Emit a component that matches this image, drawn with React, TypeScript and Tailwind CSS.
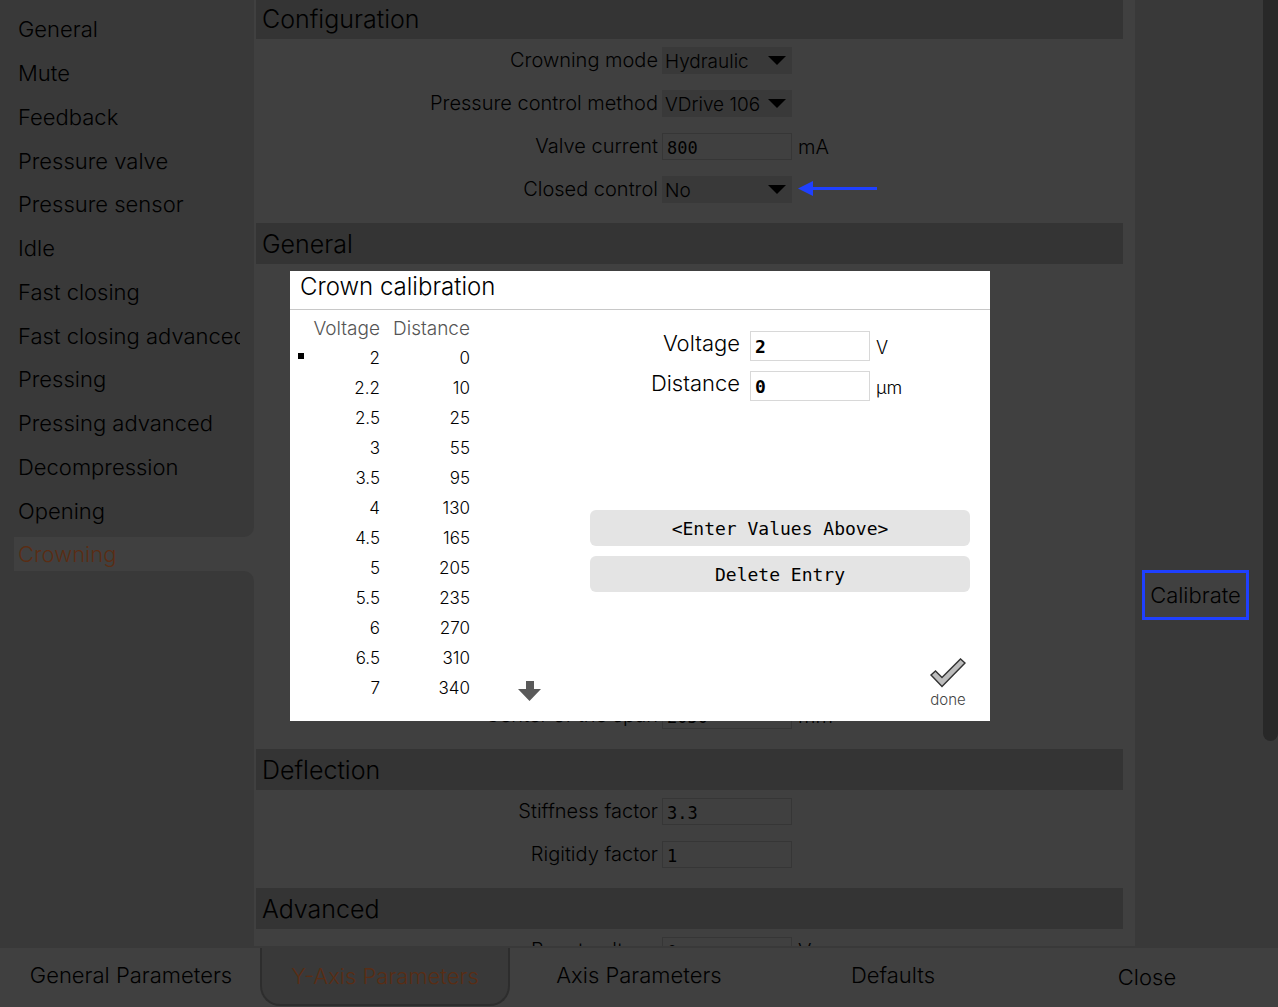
import { ReactNode, useState } from "react";

const NAV = [
  "General",
  "Mute",
  "Feedback",
  "Pressure valve",
  "Pressure sensor",
  "Idle",
  "Fast closing",
  "Fast closing advanced",
  "Pressing",
  "Pressing advanced",
  "Decompression",
  "Opening",
];

const POINTS: [string, string][] = [
  ["2", "0"],
  ["2.2", "10"],
  ["2.5", "25"],
  ["3", "55"],
  ["3.5", "95"],
  ["4", "130"],
  ["4.5", "165"],
  ["5", "205"],
  ["5.5", "235"],
  ["6", "270"],
  ["6.5", "310"],
  ["7", "340"],
];

function Section({ title, children }: { title: string; children: ReactNode }) {
  return (
    <section className="pb-3">
      <h2 className="h-[41px] bg-[#343434] pl-1.5 text-[25px] leading-[42px]">{title}</h2>
      {children}
    </section>
  );
}

function Row({ id, label, unit, children }: { id: string; label: string; unit?: ReactNode; children: ReactNode }) {
  return (
    <div className="flex h-[43px] items-start pt-2">
      <label htmlFor={id} className="w-[406px] shrink-0 pr-1 text-right text-[20px] leading-[27px]">
        {label}
      </label>
      {children}
      {unit}
    </div>
  );
}

function Unit({ children }: { children: ReactNode }) {
  return <span className="pl-1.5 text-[20px] leading-[29px]">{children}</span>;
}

function Choice({ id, value }: { id: string; value: string }) {
  return (
    <div className="relative w-[130px]">
      <select id={id} className="block h-[27px] w-full appearance-none bg-[#393939] pl-[3px] pt-[3px] text-[19px] leading-[24px] outline-none">
        <option>{value}</option>
      </select>
      <svg className="pointer-events-none absolute right-1.5 top-2" width="18" height="10" viewBox="0 0 18 10">
        <path d="M0 1H18L9 10Z" fill="#000" />
      </svg>
    </div>
  );
}

function Field({ id, value }: { id: string; value: string }) {
  return (
    <input
      id={id}
      defaultValue={value}
      className="block h-[27px] w-[130px] border border-[#363636] bg-transparent pl-1 pt-0.5 font-['DejaVu_Sans_Mono',monospace] text-[17px] leading-[24px] outline-none"
    />
  );
}

function CalibrationField({ id, label, value, unit }: { id: string; label: string; value: string; unit: string }) {
  return (
    <div className="flex h-[30px] items-start">
      <label htmlFor={id} className="w-[150px] text-right text-[22px] leading-[25px]">
        {label}
      </label>
      <input
        id={id}
        defaultValue={value}
        className="ml-2.5 h-[30px] w-[120px] border border-[#d8d8d8] bg-white pl-1 font-['DejaVu_Sans_Mono',monospace] text-[18px] font-bold outline-none"
      />
      <span className="ml-1.5 pt-1 text-[18px] leading-[25px]">{unit}</span>
    </div>
  );
}

function CalibrationDialog() {
  const [selected, setSelected] = useState(0);
  const button =
    "h-9 w-full rounded-md bg-[#e4e4e4] font-['DejaVu_Sans_Mono',monospace] text-[18px] leading-[38px]";
  return (
    <div className="fixed inset-0 flex items-center justify-center pb-[15px] pl-0.5">
      <div role="dialog" aria-label="Crown calibration" className="flex h-[450px] w-[700px] flex-col bg-white font-light text-black">
        <h1 className="h-[39px] border-b border-[#c8c8c8] pl-2.5 text-[24px] leading-[32px]">Crown calibration</h1>
        <div className="flex flex-1 pr-5">
          <table className="mt-1 w-[180px] table-fixed self-start text-right text-[17px]">
            <thead>
              <tr className="h-[30px] text-[19px] text-[#555]">
                <th className="w-[18px] p-0" aria-label="Selected" />
                <th className="w-[72px] p-0 text-right font-light">Voltage</th>
                <th className="w-[90px] p-0 text-right font-light">Distance</th>
              </tr>
            </thead>
            <tbody>
              {POINTS.map(([v, d], i) => (
                <tr key={v} className="h-[30px]" onClick={() => setSelected(i)}>
                  <td className="p-0 pl-2">{i === selected && <div className="mb-1.5 size-1.5 bg-black" />}</td>
                  <td className="p-0">{v}</td>
                  <td className="p-0">{d}</td>
                </tr>
              ))}
            </tbody>
          </table>
          <button aria-label="Scroll down" className="mb-5 ml-12 self-end">
            <svg width="23" height="20" viewBox="0 0 23 20">
              <path d="M8 0H16V8H23L11.5 20L0 8H8Z" fill="#5a5a5a" />
            </svg>
          </button>
          <div className="ml-auto flex w-[380px] flex-col pt-[21px]">
            <div className="flex flex-col gap-2.5">
              <CalibrationField id="cal-voltage" label="Voltage" value="2" unit="V" />
              <CalibrationField id="cal-distance" label="Distance" value="0" unit="µm" />
            </div>
            <div className="mt-[109px] flex flex-col gap-2.5">
              <button className={button}>&lt;Enter Values Above&gt;</button>
              <button className={button}>Delete Entry</button>
            </div>
            <button className="mb-3 mr-1 mt-auto flex flex-col items-center self-end text-[15px] leading-[18px] text-[#444]">
              <svg className="mb-[3px]" width="36" height="30" viewBox="0 0 36 30">
                <path d="M1 17L5.500 13L12 19.500L30.500 1L35 5L12 28.500Z" fill="#bdbdbd" stroke="#333" strokeWidth="1.500" />
              </svg>
              done
            </button>
          </div>
        </div>
      </div>
    </div>
  );
}

export default function App() {
  const tab = "h-[58px] whitespace-nowrap pb-1 text-center text-[22px] leading-[54px]";
  return (
    <div className="flex h-screen flex-col overflow-hidden bg-[#404040] font-['Inter','Liberation_Sans',sans-serif] font-light text-black">
      <div className="flex min-h-0 flex-1">
        <nav className="flex w-[254px] shrink-0 flex-col text-[22px]">
          <div className="rounded-br-[10px] bg-[#393939] pb-1 pl-[18px] pr-3.5 pt-2">
            <ul className="grid h-[525px] auto-rows-fr">
              {NAV.map((item) => (
                <li key={item} className="flex items-center overflow-hidden">
                  <a href="#" className="whitespace-nowrap">
                    {item}
                  </a>
                </li>
              ))}
            </ul>
          </div>
          <div className="border-l-[14px] border-[#393939]">
            <a href="#" aria-current="page" className="block pl-1 leading-[34px] text-[#5a2d14]">
              Crowning
            </a>
          </div>
          <div className="flex-1 rounded-tr-[10px] bg-[#393939]" />
        </nav>

        <main className="min-w-0 flex-1 overflow-hidden pl-0.5 pr-3">
          <div className="-mt-0.5">
            <Section title="Configuration">
              <Row id="mode" label="Crowning mode">
                <Choice id="mode" value="Hydraulic" />
              </Row>
              <Row id="method" label="Pressure control method">
                <Choice id="method" value="VDrive 106" />
              </Row>
              <Row id="current" label="Valve current" unit={<Unit>mA</Unit>}>
                <Field id="current" value="800" />
              </Row>
              <Row
                id="closed"
                label="Closed control"
                unit={
                  <svg className="ml-1.5 mt-1" width="80" height="16" viewBox="0 0 80 16">
                    <path d="M0 8.500L15 1V7H79V10H15V16Z" fill="#1f40ff" />
                  </svg>
                }
              >
                <Choice id="closed" value="No" />
              </Row>
            </Section>
            <Section title="General">
              <div className="h-[430px]" />
              <Row id="center" label="Center of the span" unit={<Unit>mm</Unit>}>
                <Field id="center" value="2050" />
              </Row>
            </Section>
            <Section title="Deflection">
              <Row id="stiffness" label="Stiffness factor">
                <Field id="stiffness" value="3.3" />
              </Row>
              <Row id="rigidity" label="Rigitidy factor">
                <Field id="rigidity" value="1" />
              </Row>
            </Section>
            <Section title="Advanced">
              <Row id="boost" label="Boost voltage" unit={<Unit>V</Unit>}>
                <Field id="boost" value="0" />
              </Row>
            </Section>
          </div>
        </main>

        <aside className="flex w-[143px] shrink-0 justify-between bg-[#393939] pl-[7px]">
          <button className="mt-[570px] h-[50px] w-[107px] border-[3px] border-[#1f40ff] bg-[#404040] text-[22px]">
            Calibrate
          </button>
          <div className="h-[741px] w-[15px] rounded-b-[8px] bg-[#282828]" />
        </aside>
      </div>

      <footer className="grid h-[61px] shrink-0 grid-cols-5 border-t-2 border-[#393939] px-1">
        <button className={tab}>General Parameters</button>
        <button className="mx-0.5 h-[58px] whitespace-nowrap rounded-b-[20px] border-2 border-t-0 border-[#2d2d2d] bg-[#393939] text-[22px] leading-[54px] text-[#5a2d14]">
          Y-Axis Parameters
        </button>
        <button className={tab}>Axis Parameters</button>
        <button className={tab}>Defaults</button>
        <button className="h-[58px] text-center text-[22px] leading-[54px]">Close</button>
      </footer>

      <CalibrationDialog />
    </div>
  );
}
